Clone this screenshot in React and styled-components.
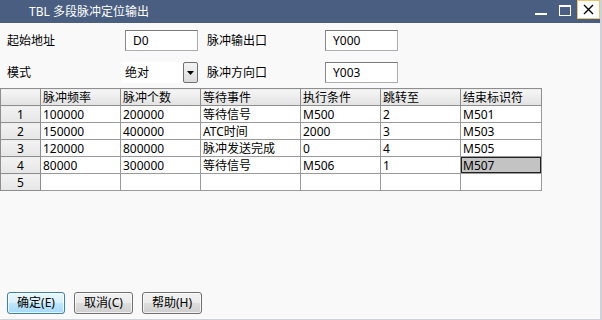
import React from "react";
import styled, { createGlobalStyle } from "styled-components";

const Global = createGlobalStyle`
  html, body { margin: 0; padding: 0; background: #f9f9f9; }
  body { font-family: "Noto Sans", "Noto Sans CJK SC", sans-serif; font-size: 12px; color: #000; }
  * { box-sizing: border-box; }
`;

const Window = styled.div`
  width: 602px;
  height: 320px;
  display: flex;
  flex-direction: column;
  background: #f9f9f9;
  border-right: 2px solid #cfd0da;
  border-bottom: 1px solid #cfd0da;
  overflow: hidden;
`;

const TitleBar = styled.div`
  height: 23px;
  flex: none;
  display: flex;
  align-items: center;
  background: #4a5e81;
  color: #fff;
  padding-left: 29px;
  font-size: 12px;
`;

const Title = styled.div`
  flex: 1;
  line-height: 23px;
`;

const Controls = styled.div`
  display: flex;
  align-items: flex-start;
  align-self: flex-start;
  height: 23px;
`;

const CtrlBtn = styled.div`
  width: ${(p) => p.$w}px;
  height: 19px;
  display: flex;
  align-items: center;
  justify-content: center;
  background: ${(p) => (p.$close ? "#fff" : "transparent")};
  border: ${(p) => (p.$close ? "1px solid #e6c56c" : "none")};
`;

const Content = styled.div`
  flex: 1;
  display: flex;
  flex-direction: column;
  padding-top: 7px;
`;

const FormGrid = styled.div`
  display: grid;
  grid-template-columns: 116px 75px 9px 118px 73px;
  grid-auto-rows: 21px;
  row-gap: 11px;
  padding-left: 7px;
  align-items: center;
`;

const Label = styled.div`
  grid-column: ${(p) => p.$col};
  line-height: 21px;
`;

const TextBox = styled.div`
  grid-column: ${(p) => p.$col};
  height: 21px;
  width: ${(p) => p.$w || 73}px;
  margin-left: ${(p) => p.$ml || 0}px;
  background: #fff;
  border: 1px solid #abadb3;
  border-top-color: #7a7a7a;
  border-left-color: #8a8a8a;
  padding-left: 7px;
  line-height: 19px;
`;

const SelectBox = styled.div`
  grid-column: 2;
  margin-left: -2px;
  display: flex;
  height: 21px;
  width: 77px;
  background: #fff;
`;

const SelectText = styled.div`
  flex: 1;
  padding-left: 4px;
  line-height: 21px;
`;

const DropBtn = styled.div`
  width: 15px;
  height: 21px;
  border: 1px solid #707070;
  border-radius: 2px;
  background: linear-gradient(#f4f4f4, #dcdcdc);
  display: flex;
  align-items: center;
  justify-content: center;
`;

const GridTable = styled.table`
  margin-top: 5px;
  border-collapse: collapse;
  table-layout: fixed;
  width: 541px;
`;

const HeadCell = styled.th`
  height: 17px;
  padding: 0 0 0 2px;
  font-weight: normal;
  text-align: left;
  border: 1px solid #8e8e8e;
  background: linear-gradient(#f6f6f6, #e2e2e2);
  line-height: 15px;
  white-space: nowrap;
  overflow: hidden;
`;

const RowHead = styled.td`
  height: 17px;
  padding: 0;
  text-align: center;
  border: 1px solid #8e8e8e;
  background: linear-gradient(#f2f2f2, #e6e6e6);
  line-height: 15px;
`;

const Cell = styled.td`
  height: 17px;
  padding: 0 0 0 2px;
  border: 1px solid #9a9a9a;
  background: ${(p) => (p.$sel ? "#c3c3c3" : "#fff")};
  box-shadow: ${(p) => (p.$sel ? "inset 0 0 0 1px #202020" : "none")};
  line-height: 15px;
  white-space: nowrap;
  overflow: hidden;
`;

const Footer = styled.div`
  margin-top: auto;
  display: flex;
  gap: 9px;
  padding: 0 0 5px 7px;
`;

const Button = styled.div`
  width: ${(p) => p.$w}px;
  height: 22px;
  border: 1px solid ${(p) => (p.$primary ? "#3c7fb1" : "#707070")};
  border-radius: 3px;
  background: ${(p) =>
    p.$primary
      ? "linear-gradient(#eaf6fd 0%, #d9f0fc 50%, #bee6fd 51%, #a7d9f5 100%)"
      : "linear-gradient(#f2f2f2 0%, #ebebeb 50%, #dddddd 51%, #cfcfcf 100%)"};
  box-shadow: inset 0 0 0 1px rgba(255, 255, 255, 0.7);
  display: flex;
  align-items: center;
  justify-content: center;
  line-height: 20px;
`;

const headers = ["脉冲频率", "脉冲个数", "等待事件", "执行条件", "跳转至", "结束标识符"];
const rows = [
  ["100000", "200000", "等待信号", "M500", "2", "M501"],
  ["150000", "400000", "ATC时间", "2000", "3", "M503"],
  ["120000", "800000", "脉冲发送完成", "0", "4", "M505"],
  ["80000", "300000", "等待信号", "M506", "1", "M507"],
  ["", "", "", "", "", ""],
];
const widths = [40, 80, 80, 100, 80, 80, 81];

export default function App() {
  return (
    <>
      <Global />
      <Window>
        <TitleBar>
          <Title>TBL 多段脉冲定位输出</Title>
          <Controls>
            <CtrlBtn $w={24}>
              <svg width="12" height="12" viewBox="0 0 12 12" style={{ marginTop: 1 }}>
                <rect x="0" y="9" width="12" height="2" fill="#fff" />
              </svg>
            </CtrlBtn>
            <CtrlBtn $w={24}>
              <svg width="12" height="11" viewBox="0 0 12 11" style={{ marginTop: 1 }}>
                <rect x="0.5" y="1" width="11" height="9.5" fill="none" stroke="#fff" strokeWidth="1" />
                <rect x="0" y="0" width="12" height="2" fill="#fff" />
              </svg>
            </CtrlBtn>
            <CtrlBtn $w={23} $close>
              <svg width="11" height="11" viewBox="0 0 11 11">
                <path d="M1 1 L10 10 M10 1 L1 10" stroke="#000" strokeWidth="1.4" />
              </svg>
            </CtrlBtn>
          </Controls>
        </TitleBar>
        <Content>
          <FormGrid>
            <Label $col={1}>起始地址</Label>
            <TextBox $col={2} $ml={2}>D0</TextBox>
            <Label $col={4}>脉冲输出口</Label>
            <TextBox $col={5}>Y000</TextBox>
            <Label $col={1}>模式</Label>
            <SelectBox>
              <SelectText>绝对</SelectText>
              <DropBtn>
                <svg width="7" height="4" viewBox="0 0 7 4">
                  <path d="M0 0 H7 L3.5 4 Z" fill="#000" />
                </svg>
              </DropBtn>
            </SelectBox>
            <Label $col={4}>脉冲方向口</Label>
            <TextBox $col={5}>Y003</TextBox>
          </FormGrid>
          <GridTable>
            <colgroup>
              {widths.map((w, i) => (
                <col key={i} style={{ width: w }} />
              ))}
            </colgroup>
            <thead>
              <tr>
                <HeadCell />
                {headers.map((h) => (
                  <HeadCell key={h}>{h}</HeadCell>
                ))}
              </tr>
            </thead>
            <tbody>
              {rows.map((r, i) => (
                <tr key={i}>
                  <RowHead>{i + 1}</RowHead>
                  {r.map((c, j) => (
                    <Cell key={j} $sel={i === 3 && j === 5}>
                      {c}
                    </Cell>
                  ))}
                </tr>
              ))}
            </tbody>
          </GridTable>
          <Footer>
            <Button $w={58} $primary>确定(E)</Button>
            <Button $w={59}>取消(C)</Button>
            <Button $w={60}>帮助(H)</Button>
          </Footer>
        </Content>
      </Window>
    </>
  );
}
